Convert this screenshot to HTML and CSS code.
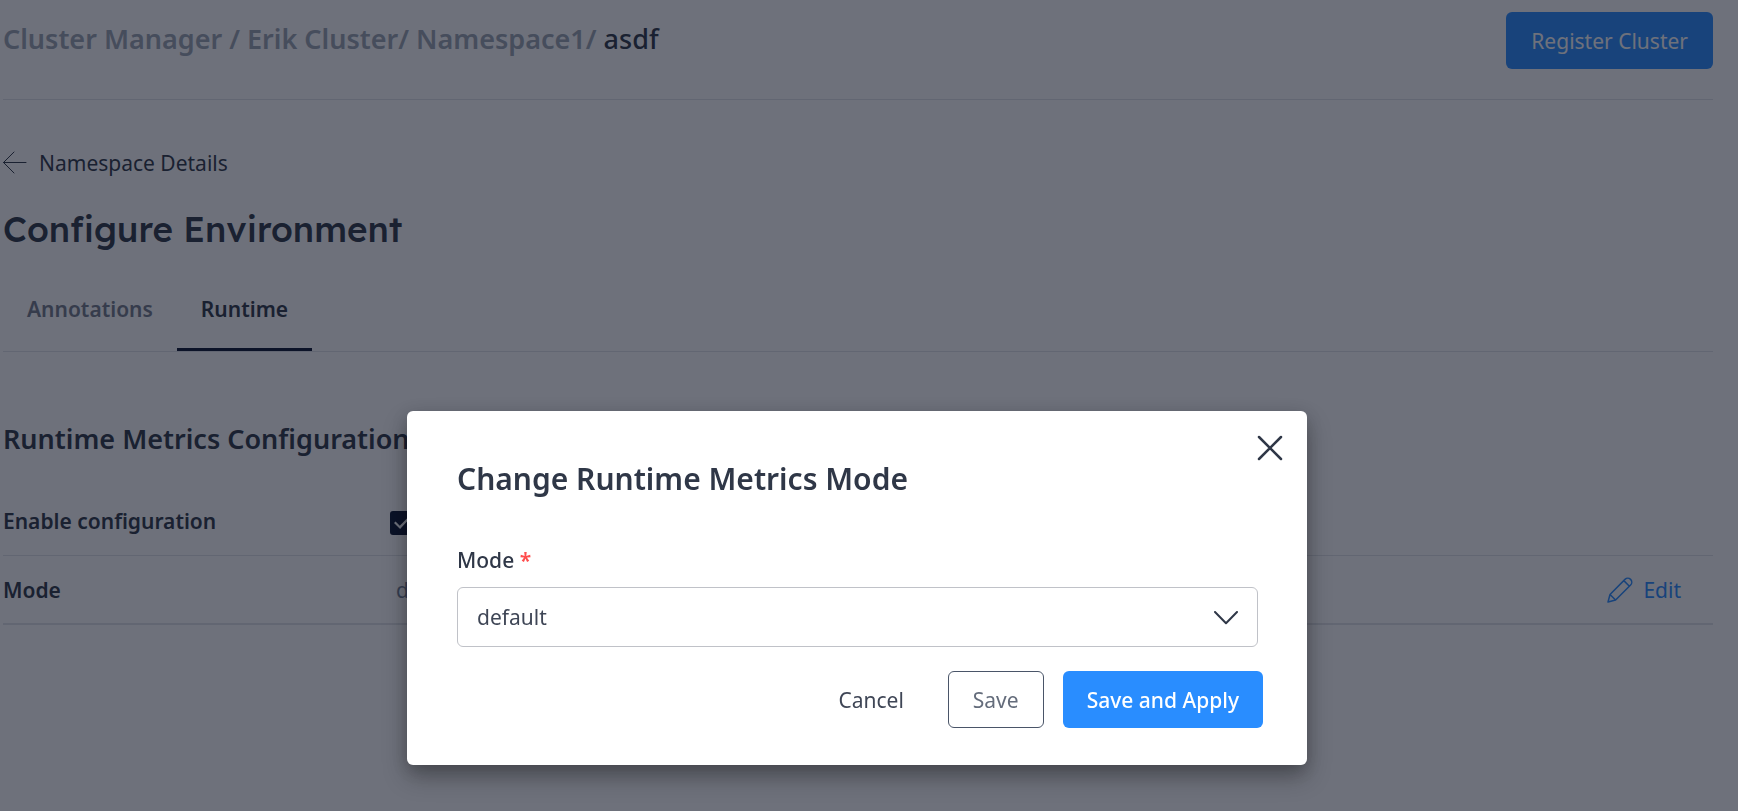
FILE: index.html
```html
<!DOCTYPE html>
<html lang="en">
<head>
<meta charset="utf-8">
<title>Configure Environment</title>
<link rel="stylesheet" href="styles.css">
</head>
<body>
<div class="page">
  <header class="topbar">
    <nav class="breadcrumb" aria-label="Breadcrumb">
      <a href="#">Cluster Manager</a> / <a href="#">Erik Cluster</a>/ <a href="#">Namespace1</a>/ <span class="current">asdf</span>
    </nav>
    <button class="btn btn-primary btn-register" type="button">Register Cluster</button>
  </header>
  <main>
    <a class="back" href="#">
      <svg width="24" height="24" viewBox="0 0 24 24" aria-hidden="true"><path d="M23 11.500H.5M11 1 .5 11.500 11 22"/></svg>
      Namespace Details
    </a>
    <h1 class="title">Configure Environment</h1>
    <div class="tabs" role="tablist">
      <button class="tab" role="tab" type="button">Annotations</button>
      <button class="tab active" role="tab" type="button" aria-selected="true">Runtime</button>
    </div>
    <h2 class="section-title">Runtime Metrics Configuration</h2>
    <div class="row">
      <label class="row-label" for="enable">Enable configuration</label>
      <input class="check" id="enable" type="checkbox" checked>
    </div>
    <div class="row row-last">
      <span class="row-label">Mode</span>
      <span class="row-value">default</span>
      <button class="edit" type="button">
        <svg width="26" height="26" viewBox="0 0 26 26" aria-hidden="true"><path d="M1 25 3 17.500 18 2.400a3.900 3.900 0 0 1 5.600 5.600L8.600 23ZM3 17.500 8.600 23M16.800 3.600l5.600 5.600"/></svg>
        Edit
      </button>
    </div>
  </main>
</div>
<div class="overlay">
  <div class="modal" role="dialog" aria-modal="true" aria-labelledby="modal-title">
    <button class="close" type="button" aria-label="Close">
      <svg width="26" height="26" viewBox="0 0 26 26" aria-hidden="true"><path d="m2 2 22 22M24 2 2 24"/></svg>
    </button>
    <h2 class="modal-title" id="modal-title">Change Runtime Metrics Mode</h2>
    <label class="field-label" for="mode">Mode <span class="required">*</span></label>
    <div class="select-wrap">
      <select class="select" id="mode"><option>default</option></select>
      <svg class="chevron" width="24" height="14" viewBox="0 0 24 14" aria-hidden="true"><path d="m1 1 11 11.300L23 1"/></svg>
    </div>
    <div class="actions">
      <button class="btn btn-text" type="button">Cancel</button>
      <button class="btn btn-outline" type="button">Save</button>
      <button class="btn btn-primary btn-apply" type="button">Save and Apply</button>
    </div>
  </div>
</div>
</body>
</html>
```
FILE: styles.css
```css
* { box-sizing: border-box; }

body {
  margin: 0;
  background: #fff;
  color: #2f3747;
  font: 400 21px/28px "Noto Sans", "Open Sans", sans-serif;
}

button, select { font: inherit; color: inherit; cursor: pointer; }
a { color: inherit; text-decoration: none; }
h1, h2 { margin: 0; }
svg { display: block; fill: none; stroke: currentColor; stroke-linejoin: round; stroke-linecap: round; }

.page { padding: 0 25px 0 3px; }

.topbar {
  display: flex;
  justify-content: space-between;
  align-items: flex-start;
  padding: 12px 0 30px;
  border-bottom: 1px solid #e2e4e8;
}

.breadcrumb {
  padding-top: 7px;
  color: #9ca5b2;
  font-size: 27px;
  line-height: 40px;
  font-weight: 600;
}
.breadcrumb .current { color: #2f3747; font-weight: 500; }

.btn {
  height: 57px;
  padding: 0 24px;
  border: 1px solid transparent;
  border-radius: 6px;
  background: none;
}
.btn-primary { background: #298dff; color: #fff; }
.btn-text { color: #3f4656; }

.back {
  display: inline-flex;
  align-items: center;
  gap: 12px;
  margin-top: 49px;
}

.title {
  margin-top: 24px;
  font-family: Lexend, Inter, sans-serif;
  font-size: 35px;
  line-height: 48px;
  font-weight: 500;
}

.tabs { display: flex; margin-top: 38px; border-bottom: 1px solid #e2e4e8; }
.tab {
  padding: 4px 24px 25px;
  border: 0;
  border-bottom: 3px solid transparent;
  background: none;
  color: #747c8b;
  font-weight: 600;
}
.tab.active { color: #2f3747; border-color: #0a1530; }

.section-title {
  margin: 67px 0 28px;
  font-size: 27px;
  line-height: 40px;
  font-weight: 600;
}

.row {
  display: grid;
  grid-template-columns: 387px 1fr auto;
  align-items: center;
  height: 69px;
  border-bottom: 1px solid #e2e4e8;
}
.row-last { border-bottom-width: 2px; }
.row-label { font-weight: 600; }
.row-value { padding-left: 6px; color: #718096; }

.check {
  appearance: none;
  width: 24px;
  height: 24px;
  margin: 4px 0 0;
  border-radius: 3px;
  background: #0a1530;
  display: grid;
  place-items: center;
}
.check::before {
  content: "";
  width: 16px;
  height: 12px;
  background: #fff;
  clip-path: polygon(0 50%, 10% 38%, 36% 72%, 90% 0, 100% 10%, 38% 100%);
}

.edit {
  display: flex;
  align-items: center;
  gap: 10px;
  padding: 0 32px 0 0;
  border: 0;
  background: none;
  color: #298dff;
}
.edit svg { stroke-width: 1.5; }

.overlay {
  position: fixed;
  inset: 0;
  display: flex;
  justify-content: center;
  align-items: flex-end;
  padding: 0 24px 46px 0;
  background: rgba(13, 18, 35, .6);
}

.modal {
  position: relative;
  width: 900px;
  max-width: 100%;
  padding: 48px 44px 37px 50px;
  border-radius: 6px;
  background: #fff;
  box-shadow: 0 12px 24px rgba(0, 0, 0, .3), 0 4px 16px rgba(0, 0, 0, .15);
}

.close {
  position: absolute;
  top: 24px;
  right: 24px;
  padding: 0;
  border: 0;
  background: none;
}
.close svg { stroke-width: 2.5; }

.modal-title { font-size: 30px; line-height: 40px; font-weight: 600; }
.field-label { display: block; margin-top: 47px; font-weight: 500; }
.required { color: #ff4d4d; font-weight: 600; }

.select-wrap { position: relative; margin: 13px 5px 24px 0; }
.select {
  appearance: none;
  display: block;
  width: 100%;
  height: 60px;
  padding: 0 60px 0 19px;
  border: 1px solid #c0c2c8;
  border-radius: 6px;
  background: #fff;
  color: #3f4656;
}
.chevron {
  position: absolute;
  top: 24px;
  right: 20px;
  stroke-width: 2;
  pointer-events: none;
}

.actions { display: flex; justify-content: flex-end; gap: 19px; }
.btn-outline { border-color: #4a5568; color: #646c7b; }
.btn-apply { padding: 0 23px; font-weight: 500; }
```
